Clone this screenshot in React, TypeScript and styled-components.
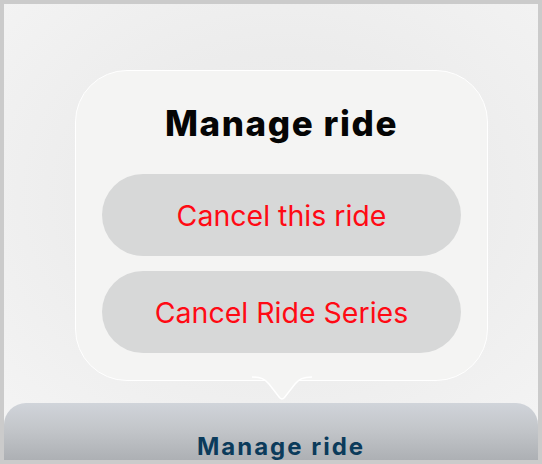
import React from 'react';
import styled, { createGlobalStyle } from 'styled-components';

const GlobalStyle = createGlobalStyle`
  html, body {
    margin: 0;
    padding: 0;
  }
  body {
    font-family: Inter, "Liberation Sans", sans-serif;
  }
`;

const Screen = styled.div`
  width: 542px;
  height: 464px;
  box-sizing: border-box;
  border: 4px solid #cbcbcb;
  background: radial-gradient(ellipse 75% 70% at 52% 42%, #e9e9e9 0%, #ececec 45%, #f4f4f4 100%);
  display: flex;
  flex-direction: column;
  overflow: hidden;
`;

const Popover = styled.div`
  position: relative;
  margin: 66px 0 0 71px;
  width: 413px;
  box-sizing: border-box;
  padding: 0 26px 27px;
  background: #f4f4f3;
  border: 1.5px solid #ffffff;
  border-radius: 52px;
  display: flex;
  flex-direction: column;
  align-items: stretch;
`;

const Title = styled.h2`
  margin: 0;
  padding: 30px 0 29px;
  text-align: center;
  font-family: Inter, "Liberation Sans", sans-serif;
  font-weight: 800;
  font-size: 35px;
  line-height: 44px;
  letter-spacing: 1.6px;
  color: #050505;
`;

const Actions = styled.div`
  display: flex;
  flex-direction: column;
  gap: 15px;
`;

const ActionButton = styled.button`
  height: 82px;
  border: none;
  border-radius: 41px;
  background: #d7d8d8;
  color: #ff0a14;
  font-family: Inter, "Liberation Sans", sans-serif;
  font-size: 28.5px;
  font-weight: 400;
  cursor: pointer;
  padding: 0;
`;

const Tail = styled.svg`
  position: absolute;
  left: 50%;
  bottom: -23px;
  transform: translateX(-50%);
  overflow: visible;
`;

const Footer = styled.div`
  margin-top: auto;
  width: 100%;
  height: 57px;
  box-sizing: border-box;
  padding: 30px 0 0 20px;
  border-radius: 22px 22px 0 0;
  background: linear-gradient(180deg, #d0d4da 0%, #c3c6ca 45%, #adb0b4 100%);
  text-align: center;
  overflow: hidden;
`;

const FooterLabel = styled.span`
  font-family: Inter, "Liberation Sans", sans-serif;
  font-weight: 700;
  font-size: 24px;
  line-height: 28px;
  letter-spacing: 2px;
  color: #0b3b5b;
`;

export default function App() {
  return (
    <>
      <GlobalStyle />
      <Screen>
        <Popover>
          <Title>Manage ride</Title>
          <Actions>
            <ActionButton>Cancel this ride</ActionButton>
            <ActionButton>Cancel Ride Series</ActionButton>
          </Actions>
          <Tail width="60" height="26" viewBox="0 0 60 26">
            <path
              d="M0 0 C9 0 13 2 17 7 L27.5 20.5 Q30 23.5 32.5 20.5 L43 7 C47 2 51 0 60 0 Z"
              fill="#f4f4f3"
            />
            <path
              d="M0 0 C9 0 13 2 17 7 L27.5 20.5 Q30 23.5 32.5 20.5 L43 7 C47 2 51 0 60 0"
              fill="none"
              stroke="#ffffff"
              strokeWidth="1.5"
            />
          </Tail>
        </Popover>
        <Footer>
          <FooterLabel>Manage ride</FooterLabel>
        </Footer>
      </Screen>
    </>
  );
}
